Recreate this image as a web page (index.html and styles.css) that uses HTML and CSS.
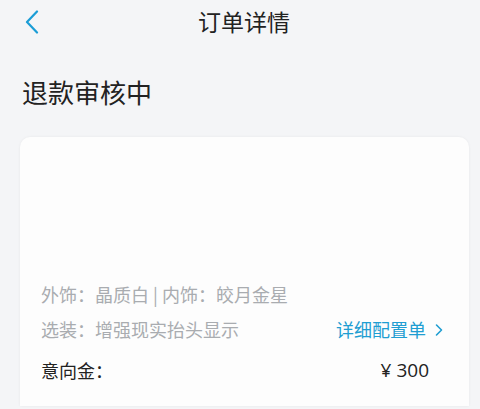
FILE: index.html
```html
<!DOCTYPE html>
<html lang="zh">
<head>
<meta charset="utf-8">
<link rel="stylesheet" href="styles.css">
</head>
<body>
<header class="nav">
  <div class="nav-left">
    <svg class="back" width="14" height="24" viewBox="0 0 14 24"><path d="M12 1.5 L2 12 L12 22.5" fill="none" stroke="#1a9dd6" stroke-width="2.2" stroke-linecap="round" stroke-linejoin="round"/></svg>
  </div>
  <div class="nav-title">订单详情</div>
  <div class="nav-right"></div>
</header>
<h1 class="status">退款审核中</h1>
<section class="card">
  <div class="media"></div>
  <div class="row muted">外饰：晶质白 | 内饰：皎月金星</div>
  <div class="row muted split">
    <span>选装：增强现实抬头显示</span>
    <span class="link">详细配置单<svg class="chev" width="8" height="14" viewBox="0 0 8 14"><path d="M1.5 2 L6.5 7 L1.5 12" fill="none" stroke="#1f9ed2" stroke-width="1.6" stroke-linecap="round" stroke-linejoin="round"/></svg></span>
  </div>
  <div class="row strong split deposit">
    <span>意向金：</span>
    <span class="amount">¥ 300</span>
  </div>
</section>
</body>
</html>
```
FILE: styles.css
```css
html, body {
  margin: 0;
  padding: 0;
  background: #f4f5f7;
  font-family: "Noto Sans CJK SC", "Noto Sans", sans-serif;
  color: #222;
  width: 480px;
  height: 409px;
  overflow: hidden;
}
.nav {
  display: grid;
  grid-template-columns: 1fr auto 1fr;
  align-items: center;
  height: 44px;
}
.nav-left {
  padding-left: 25px;
  display: flex;
  align-items: center;
}
.back { display: block; margin-top: -1px; }
.nav-title {
  font-size: 23px;
  line-height: 44px;
  color: #222;
  margin-top: -2px;
  padding-left: 8px;
}
.status {
  margin: 30px 0 0 22px;
  font-size: 26px;
  font-weight: 400;
  line-height: 36px;
  color: #222;
}
.card {
  margin: 27px 11px 0 20px;
  background: #fdfdfd;
  border-radius: 10px 10px 0 0;
  box-shadow: 0 0 3px rgba(0,0,0,0.06);
  padding: 0 26px 18px 21px;
}
.media { height: 140px; }
.row {
  font-size: 18px;
  line-height: 35px;
}
.muted { color: #a9acb0; }
.split {
  display: flex;
  justify-content: space-between;
  align-items: center;
}
.link {
  color: #1f9ed2;
  display: flex;
  align-items: center;
}
.chev { margin-left: 9px; display: block; }
.deposit { margin-top: 6px; color: #222; }
.amount { margin-right: 14px; font-size: 19px; font-family: "Open Sans", "Noto Sans CJK SC", sans-serif; }
```
